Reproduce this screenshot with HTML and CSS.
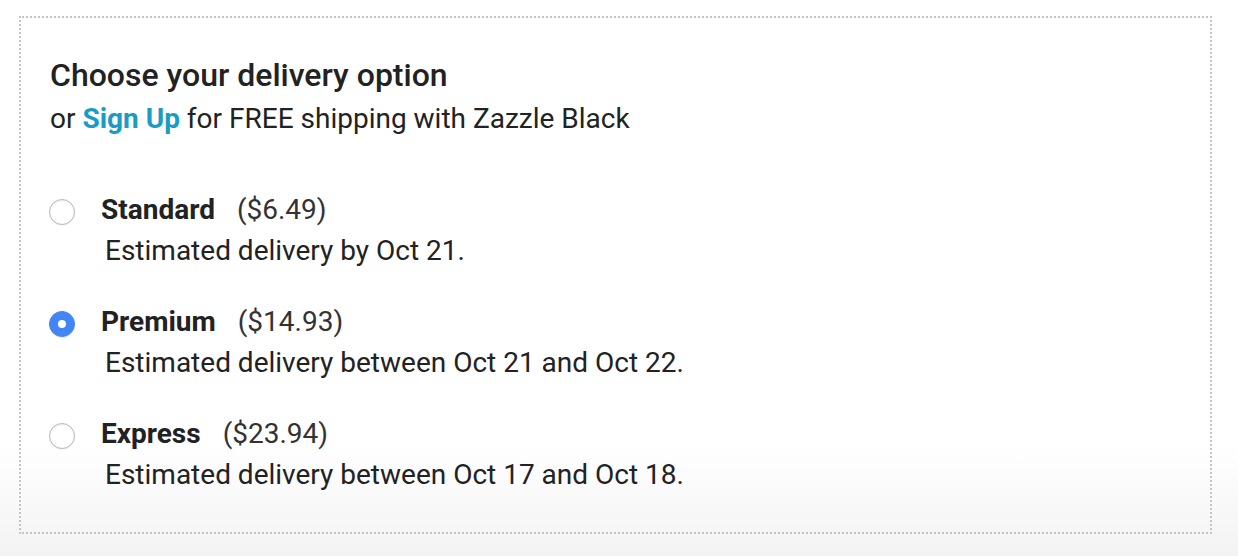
FILE: index.html
```html
<!DOCTYPE html>
<html>
<head>
<meta charset="utf-8">
<link rel="stylesheet" href="styles.css">
</head>
<body>
<div class="page">
  <section class="box">
    <h2 class="title">Choose your delivery option</h2>
    <p class="sub">or <a class="link" href="#">Sign Up</a> for FREE shipping with Zazzle Black</p>
    <div class="options">
      <label class="opt">
        <span class="radio"></span>
        <span class="text">
          <span class="line"><b class="name">Standard</b><span class="price">($6.49)</span></span>
          <span class="desc">Estimated delivery by Oct 21.</span>
        </span>
      </label>
      <label class="opt">
        <span class="radio checked"></span>
        <span class="text">
          <span class="line"><b class="name">Premium</b><span class="price">($14.93)</span></span>
          <span class="desc">Estimated delivery between Oct 21 and Oct 22.</span>
        </span>
      </label>
      <label class="opt">
        <span class="radio"></span>
        <span class="text">
          <span class="line"><b class="name">Express</b><span class="price">($23.94)</span></span>
          <span class="desc">Estimated delivery between Oct 17 and Oct 18.</span>
        </span>
      </label>
    </div>
  </section>
</div>
</body>
</html>
```

FILE: styles.css
```css
html, body {
  margin: 0;
  padding: 0;
}
body {
  width: 1238px;
  height: 556px;
  overflow: hidden;
  font-family: Roboto, "Liberation Sans", sans-serif;
  color: #222;
  background: linear-gradient(to bottom, #ffffff 0px, #ffffff 445px, #f3f3f3 556px);
}
.page {
  padding: 16px 26px 0 19px;
}
.box {
  border: 2px dotted #c4c4c4;
  height: 518px;
  box-sizing: border-box;
  padding: 38px 29px 0 29px;
}
.title {
  margin: 0;
  font-size: 32px;
  font-weight: 500;
  line-height: 38px;
  color: #222;
}
.sub {
  margin: 8px 0 0 0;
  font-size: 28px;
  line-height: 34px;
  color: #222;
}
.link {
  color: #1a9cc4;
  font-weight: 700;
  text-decoration: none;
}
.options {
  margin-top: 57px;
  display: flex;
  flex-direction: column;
  gap: 37px;
}
.opt {
  display: flex;
  align-items: flex-start;
}
.radio {
  flex: none;
  width: 26px;
  height: 26px;
  box-sizing: border-box;
  border-radius: 50%;
  border: 1px solid #b9b9b9;
  box-shadow: inset 0 1px 2px rgba(0,0,0,0.08), 0 1px 1px rgba(0,0,0,0.06);
  background: #fff;
  margin-top: 6px;
  margin-left: -1px;
  margin-right: 26px;
  position: relative;
}
.radio.checked {
  background: #4285f4;
  border-color: #4285f4;
  box-shadow: 0 1px 1px rgba(0,0,0,0.08);
}
.radio.checked::after {
  content: "";
  position: absolute;
  left: 50%;
  top: 50%;
  width: 8px;
  height: 8px;
  margin: -4px 0 0 -4px;
  border-radius: 50%;
  background: #fff;
}
.text {
  display: flex;
  flex-direction: column;
}
.line {
  font-size: 28px;
  line-height: 34px;
}
.name {
  font-weight: 700;
  color: #222;
  margin-right: 22px;
}
.price {
  color: #333;
}
.desc {
  margin-top: 7px;
  margin-left: 4px;
  font-size: 28px;
  line-height: 34px;
  color: #222;
}
```
